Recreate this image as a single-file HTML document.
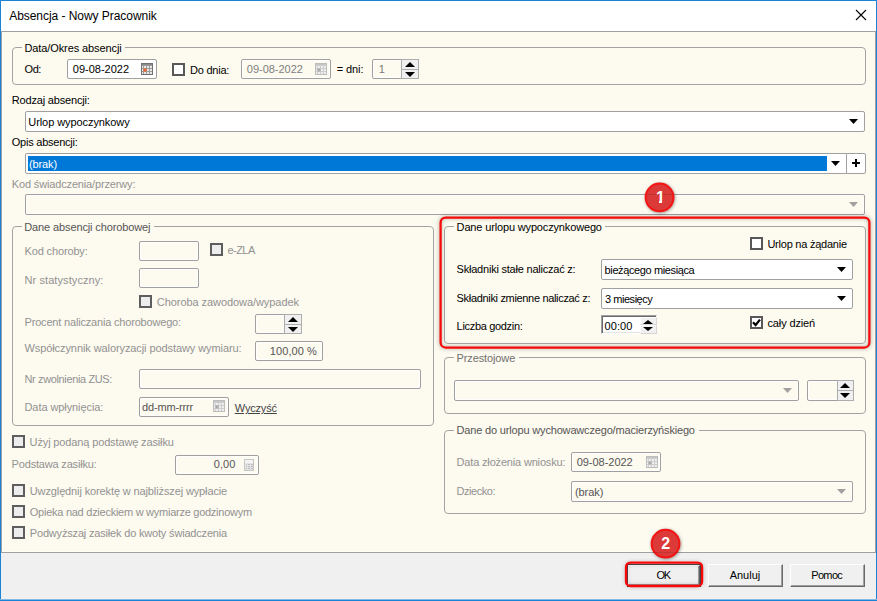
<!DOCTYPE html>
<html lang="pl"><head><meta charset="utf-8"><title>Absencja - Nowy Pracownik</title>
<style>
html,body{margin:0;padding:0;}
body{width:877px;height:601px;overflow:hidden;background:#F0F0F0;font-family:"Liberation Sans",sans-serif;font-size:11px;}
#win{position:absolute;left:0;top:0;width:877px;height:601px;background:#F0F0F0;overflow:hidden;}
.abs,.t,.gb,.in,.cb,.btn,.sp{position:absolute;box-sizing:border-box;}
.t{white-space:pre;line-height:14px;height:14px;}
.gb{border:1px solid #A3A3A3;border-radius:4px;}
.gt{position:absolute;background:#FDFAEF;height:3px;top:-2px;}
.in{border:1px solid #A0A0A0;border-radius:2px;background:#fff;}
.in.d{background:#FDFAEF;box-shadow:inset 0 0 0 1px #fff;}
.cb{width:13px;height:13px;border:2px solid #585858;background:#fff;}
.cb.d{background:#EDEDED;border-color:#5E5E5E;}
.btn{background:#F0F0F0;border-top:1px solid #fff;border-left:1px solid #fff;border-right:1px solid #696969;border-bottom:1px solid #696969;box-shadow:inset -1px -1px 0 #A0A0A0;}
.sb{position:absolute;box-sizing:border-box;background:#F0F0F0;border:1px solid #ADADAD;}
</style></head>
<body><div id="win">
<div class="abs" style="left:0;top:0;width:877px;height:601px;background:#1883D7"></div>
<div class="abs" style="left:1px;top:1px;width:875px;height:599px;background:#F0F0F0"></div>
<div class="abs" style="left:1px;top:1px;width:875px;height:30px;background:#fff"></div>
<div class="abs" style="left:1px;top:31px;width:875px;height:522px;background:#FDFAEF;border:1px solid #A0A0A0;box-shadow:inset 1px -1px 0 #FFFEF7;box-sizing:border-box"></div>
<div class="abs" style="left:0;top:599px;width:877px;height:1px;background:#84B9E3"></div>
<svg class="abs" style="left:855px;top:9px" width="12" height="12" viewBox="0 0 12 12"><path d="M1 1 L11 11 M11 1 L1 11" stroke="#000" stroke-width="1.1" fill="none"/></svg>
<div class="gb" style="left:12px;top:47px;width:854px;height:38px"><div class="gt" style="left:9px;width:103px"></div></div>
<div class="in " style="left:67px;top:59px;width:90px;height:20px"></div>
<svg class="abs" style="left:141px;top:63px" width="12" height="12" viewBox="0 0 12 12" shape-rendering="crispEdges"><rect x="0" y="0" width="12" height="12" fill="#707070"/><rect x="1" y="1" width="10" height="10" fill="#9C9C9C"/><rect x="1" y="1" width="10" height="1" fill="#8A8A8A"/><rect x="1" y="3" width="1" height="2" fill="#E8E8E8"/><rect x="3" y="3" width="2" height="2" fill="#E8E8E8"/><rect x="6" y="3" width="2" height="2" fill="#E8E8E8"/><rect x="9" y="3" width="2" height="2" fill="#E8E8E8"/><rect x="1" y="6" width="1" height="2" fill="#E8E8E8"/><rect x="3" y="6" width="2" height="2" fill="#E8E8E8"/><rect x="6" y="6" width="2" height="2" fill="#E8E8E8"/><rect x="9" y="6" width="2" height="2" fill="#E8E8E8"/><rect x="1" y="9" width="1" height="2" fill="#E8E8E8"/><rect x="3" y="9" width="2" height="2" fill="#E8E8E8"/><rect x="6" y="9" width="2" height="2" fill="#E8E8E8"/><rect x="9" y="9" width="2" height="2" fill="#E8E8E8"/><rect x="2.5" y="5.5" width="3" height="3" fill="#F0662C" shape-rendering="auto"/></svg>
<div class="cb " style="left:172px;top:63px"></div>
<div class="in d" style="left:241px;top:59px;width:90px;height:20px"></div>
<svg class="abs" style="left:315px;top:63px" width="12" height="12" viewBox="0 0 12 12" shape-rendering="crispEdges"><rect x="0" y="0" width="12" height="12" fill="#BDBDBD"/><rect x="1" y="1" width="10" height="10" fill="#CECECE"/><rect x="1" y="1" width="10" height="1" fill="#C6C6C6"/><rect x="1" y="3" width="1" height="2" fill="#EEEEEE"/><rect x="3" y="3" width="2" height="2" fill="#EEEEEE"/><rect x="6" y="3" width="2" height="2" fill="#EEEEEE"/><rect x="9" y="3" width="2" height="2" fill="#EEEEEE"/><rect x="1" y="6" width="1" height="2" fill="#EEEEEE"/><rect x="3" y="6" width="2" height="2" fill="#EEEEEE"/><rect x="6" y="6" width="2" height="2" fill="#EEEEEE"/><rect x="9" y="6" width="2" height="2" fill="#EEEEEE"/><rect x="1" y="9" width="1" height="2" fill="#EEEEEE"/><rect x="3" y="9" width="2" height="2" fill="#EEEEEE"/><rect x="6" y="9" width="2" height="2" fill="#EEEEEE"/><rect x="9" y="9" width="2" height="2" fill="#EEEEEE"/><rect x="2.5" y="5.5" width="3" height="3" fill="#ABABAB" shape-rendering="auto"/></svg>
<div class="in d" style="left:372px;top:59px;width:47px;height:20px"></div>
<div class="sb" style="left:401px;top:59px;width:18px;height:11px"></div>
<div class="sb" style="left:401px;top:69px;width:18px;height:10px"></div>
<svg class="abs" style="left:405px;top:62px" width="10" height="5"><polygon points="0,5 10,5 5.0,0" fill="#000"/></svg>
<svg class="abs" style="left:405px;top:72px" width="10" height="5"><polygon points="0,0 10,0 5.0,5" fill="#000"/></svg>
<div class="in " style="left:25px;top:111px;width:840px;height:21px"></div>
<svg class="abs" style="left:849px;top:119px" width="9" height="5"><polygon points="0,0 9,0 4.5,5" fill="#000"/></svg>
<div class="in" style="left:25px;top:153px;width:822px;height:21px;border-radius:2px 0 0 2px"></div>
<div class="abs" style="left:28px;top:156px;width:799px;height:15px;background:#0078D7"></div>
<svg class="abs" style="left:831px;top:161px" width="9" height="5"><polygon points="0,0 9,0 4.5,5" fill="#000"/></svg>
<div class="in" style="left:846px;top:153px;width:20px;height:21px;border-radius:0 2px 2px 0"></div>
<div class="abs" style="left:852px;top:162px;width:8px;height:2px;background:#000"></div><div class="abs" style="left:855px;top:159px;width:2px;height:8px;background:#000"></div>
<div class="in d" style="left:25px;top:194px;width:840px;height:21px"></div>
<svg class="abs" style="left:849px;top:202px" width="9" height="5"><polygon points="0,0 9,0 4.5,5" fill="#A0A0A0"/></svg>
<div class="gb" style="left:12px;top:226px;width:422px;height:200px"><div class="gt" style="left:9px;width:132px"></div></div>
<div class="in d" style="left:139px;top:241px;width:60px;height:20px"></div>
<div class="cb d" style="left:210px;top:243px"></div>
<div class="in d" style="left:139px;top:268px;width:60px;height:20px"></div>
<div class="cb d" style="left:139px;top:295px"></div>
<div class="in d" style="left:255px;top:314px;width:47px;height:20px"></div>
<div class="sb" style="left:284px;top:314px;width:18px;height:11px"></div>
<div class="sb" style="left:284px;top:324px;width:18px;height:10px"></div>
<svg class="abs" style="left:288px;top:317px" width="10" height="5"><polygon points="0,5 10,5 5.0,0" fill="#000"/></svg>
<svg class="abs" style="left:288px;top:327px" width="10" height="5"><polygon points="0,0 10,0 5.0,5" fill="#000"/></svg>
<div class="in d" style="left:255px;top:341px;width:68px;height:20px"></div>
<div class="in d" style="left:139px;top:369px;width:282px;height:20px"></div>
<div class="in d" style="left:139px;top:397px;width:90px;height:20px"></div>
<svg class="abs" style="left:213px;top:400px" width="12" height="12" viewBox="0 0 12 12" shape-rendering="crispEdges"><rect x="0" y="0" width="12" height="12" fill="#BDBDBD"/><rect x="1" y="1" width="10" height="10" fill="#CECECE"/><rect x="1" y="1" width="10" height="1" fill="#C6C6C6"/><rect x="1" y="3" width="1" height="2" fill="#EEEEEE"/><rect x="3" y="3" width="2" height="2" fill="#EEEEEE"/><rect x="6" y="3" width="2" height="2" fill="#EEEEEE"/><rect x="9" y="3" width="2" height="2" fill="#EEEEEE"/><rect x="1" y="6" width="1" height="2" fill="#EEEEEE"/><rect x="3" y="6" width="2" height="2" fill="#EEEEEE"/><rect x="6" y="6" width="2" height="2" fill="#EEEEEE"/><rect x="9" y="6" width="2" height="2" fill="#EEEEEE"/><rect x="1" y="9" width="1" height="2" fill="#EEEEEE"/><rect x="3" y="9" width="2" height="2" fill="#EEEEEE"/><rect x="6" y="9" width="2" height="2" fill="#EEEEEE"/><rect x="9" y="9" width="2" height="2" fill="#EEEEEE"/><rect x="2.5" y="5.5" width="3" height="3" fill="#ABABAB" shape-rendering="auto"/></svg>
<div class="cb d" style="left:12px;top:435px"></div>
<div class="in d" style="left:175px;top:455px;width:84px;height:20px"></div>
<svg class="abs" style="left:244px;top:459px" width="10" height="12" viewBox="0 0 10 12" shape-rendering="crispEdges"><rect width="10" height="12" fill="#C6C6C6"/><rect x="1" y="1" width="8" height="10" fill="#E4E4E4"/><rect x="1" y="1" width="8" height="3" fill="#F4F4F4"/><g fill="#BCBCBC"><rect x="2" y="5" width="1" height="1"/><rect x="4" y="5" width="2" height="1"/><rect x="7" y="5" width="2" height="1"/><rect x="2" y="7" width="1" height="1"/><rect x="4" y="7" width="2" height="1"/><rect x="7" y="7" width="2" height="1"/><rect x="2" y="9" width="1" height="1"/><rect x="4" y="9" width="2" height="1"/><rect x="7" y="9" width="2" height="1"/></g></svg>
<div class="cb d" style="left:12px;top:484px"></div>
<div class="cb d" style="left:12px;top:505px"></div>
<div class="cb d" style="left:12px;top:526px"></div>
<div class="abs" style="left:440px;top:217px;width:430px;height:131px;border-radius:5px;box-shadow:inset 0 0 5px 1px rgba(0,0,0,0.36), 0 0 4px 1px rgba(0,0,0,0.25)"></div>
<div class="gb" style="left:444px;top:226px;width:422px;height:118px"><div class="gt" style="left:9px;width:151px"></div></div>
<div class="cb " style="left:750px;top:237px"></div>
<div class="in " style="left:601px;top:259px;width:252px;height:21px"></div>
<svg class="abs" style="left:837px;top:267px" width="9" height="5"><polygon points="0,0 9,0 4.5,5" fill="#000"/></svg>
<div class="in " style="left:601px;top:288px;width:252px;height:21px"></div>
<svg class="abs" style="left:837px;top:296px" width="9" height="5"><polygon points="0,0 9,0 4.5,5" fill="#000"/></svg>
<div class="abs" style="left:601px;top:315px;width:56px;height:19px;background:#fff;box-sizing:border-box;border-top:1px solid #A0A0A0;border-left:1px solid #A0A0A0;border-right:1px solid #fff;border-bottom:1px solid #fff;box-shadow:inset 1px 1px 0 #696969, inset -1px -1px 0 #E3E3E3"></div>
<div class="abs" style="left:640px;top:317px;width:17px;height:8px;background:#F0F0F0;border:1px solid;border-color:#FBFBFB #D6D6D6 #D6D6D6 #FBFBFB;box-sizing:border-box"></div>
<div class="abs" style="left:640px;top:325px;width:17px;height:9px;background:#F0F0F0;border:1px solid;border-color:#FBFBFB #D6D6D6 #D6D6D6 #FBFBFB;box-sizing:border-box"></div>
<svg class="abs" style="left:643px;top:320px" width="10" height="4"><polygon points="0,4 10,4 5.0,0" fill="#000"/></svg>
<svg class="abs" style="left:643px;top:327px" width="10" height="4"><polygon points="0,0 10,0 5.0,4" fill="#000"/></svg>
<div class="cb " style="left:750px;top:316px"></div>
<svg class="abs" style="left:750px;top:316px" width="13" height="13" viewBox="0 0 13 13"><path d="M3 6.2 L5.6 9 L10 3.6" stroke="#000" stroke-width="2.2" fill="none"/></svg>
<div class="gb" style="left:444px;top:357px;width:422px;height:57px"><div class="gt" style="left:9px;width:65px"></div></div>
<div class="in d" style="left:454px;top:380px;width:345px;height:21px"></div>
<svg class="abs" style="left:783px;top:388px" width="9" height="5"><polygon points="0,0 9,0 4.5,5" fill="#A0A0A0"/></svg>
<div class="in d" style="left:807px;top:380px;width:47px;height:21px"></div>
<div class="sb" style="left:837px;top:380px;width:17px;height:11px"></div>
<div class="sb" style="left:837px;top:390px;width:17px;height:11px"></div>
<svg class="abs" style="left:840px;top:383px" width="10" height="5"><polygon points="0,5 10,5 5.0,0" fill="#000"/></svg>
<svg class="abs" style="left:840px;top:393px" width="10" height="5"><polygon points="0,0 10,0 5.0,5" fill="#000"/></svg>
<div class="gb" style="left:444px;top:430px;width:422px;height:84px"><div class="gt" style="left:9px;width:245px"></div></div>
<div class="in d" style="left:571px;top:452px;width:90px;height:20px"></div>
<svg class="abs" style="left:646px;top:456px" width="12" height="12" viewBox="0 0 12 12" shape-rendering="crispEdges"><rect x="0" y="0" width="12" height="12" fill="#BDBDBD"/><rect x="1" y="1" width="10" height="10" fill="#CECECE"/><rect x="1" y="1" width="10" height="1" fill="#C6C6C6"/><rect x="1" y="3" width="1" height="2" fill="#EEEEEE"/><rect x="3" y="3" width="2" height="2" fill="#EEEEEE"/><rect x="6" y="3" width="2" height="2" fill="#EEEEEE"/><rect x="9" y="3" width="2" height="2" fill="#EEEEEE"/><rect x="1" y="6" width="1" height="2" fill="#EEEEEE"/><rect x="3" y="6" width="2" height="2" fill="#EEEEEE"/><rect x="6" y="6" width="2" height="2" fill="#EEEEEE"/><rect x="9" y="6" width="2" height="2" fill="#EEEEEE"/><rect x="1" y="9" width="1" height="2" fill="#EEEEEE"/><rect x="3" y="9" width="2" height="2" fill="#EEEEEE"/><rect x="6" y="9" width="2" height="2" fill="#EEEEEE"/><rect x="9" y="9" width="2" height="2" fill="#EEEEEE"/><rect x="2.5" y="5.5" width="3" height="3" fill="#ABABAB" shape-rendering="auto"/></svg>
<div class="in d" style="left:571px;top:481px;width:282px;height:21px"></div>
<svg class="abs" style="left:837px;top:489px" width="9" height="5"><polygon points="0,0 9,0 4.5,5" fill="#A0A0A0"/></svg>
<div class="abs" style="left:627px;top:564px;width:74px;height:23px;background:#4A4A4A"></div>
<div class="btn" style="left:628px;top:565px;width:72px;height:21px"></div>
<div class="btn" style="left:708px;top:564px;width:75px;height:23px"></div>
<div class="btn" style="left:790px;top:564px;width:75px;height:23px"></div>
<span class="t" style="left:9.2px;top:9px;color:#000;font-size:12px;letter-spacing:-0.047px;">Absencja - Nowy Pracownik</span>
<span class="t" style="left:24.4px;top:41px;color:#000;font-size:11px;letter-spacing:-0.097px;">Data/Okres absencji</span>
<span class="t" style="left:24.6px;top:62px;color:#000;font-size:11px;letter-spacing:-0.467px;">Od:</span>
<span class="t" style="left:72.8px;top:62px;color:#000;font-size:11px;letter-spacing:0.002px;">09-08-2022</span>
<span class="t" style="left:190.0px;top:63px;color:#000;font-size:11px;letter-spacing:-0.226px;">Do dnia:</span>
<span class="t" style="left:246.8px;top:62px;color:#808080;font-size:11px;letter-spacing:-0.020px;">09-08-2022</span>
<span class="t" style="left:336.7px;top:62px;color:#000;font-size:11px;letter-spacing:-0.084px;">= dni:</span>
<span class="t" style="left:378.7px;top:62px;color:#7A7A7A;font-size:11px;letter-spacing:0.000px;">1</span>
<span class="t" style="left:11.8px;top:93px;color:#000;font-size:11px;letter-spacing:-0.181px;">Rodzaj absencji:</span>
<span class="t" style="left:28.3px;top:115px;color:#000;font-size:11px;letter-spacing:-0.077px;">Urlop wypoczynkowy</span>
<span class="t" style="left:11.8px;top:135px;color:#000;font-size:11px;letter-spacing:-0.238px;">Opis absencji:</span>
<span class="t" style="left:28.9px;top:157px;color:#fff;font-size:11px;letter-spacing:-0.087px;">(brak)</span>
<span class="t" style="left:11.8px;top:177px;color:#929292;font-size:11px;letter-spacing:-0.151px;">Kod świadczenia/przerwy:</span>
<span class="t" style="left:24.3px;top:220px;color:#555;font-size:11px;letter-spacing:-0.123px;">Dane absencji chorobowej</span>
<span class="t" style="left:24.5px;top:244px;color:#929292;font-size:11px;letter-spacing:-0.139px;">Kod choroby:</span>
<span class="t" style="left:227.4px;top:243px;color:#929292;font-size:11px;letter-spacing:-0.517px;">e-ZLA</span>
<span class="t" style="left:24.5px;top:273px;color:#929292;font-size:11px;letter-spacing:0.085px;">Nr statystyczny:</span>
<span class="t" style="left:156.8px;top:295px;color:#929292;font-size:11px;letter-spacing:-0.065px;">Choroba zawodowa/wypadek</span>
<span class="t" style="left:24.5px;top:315px;color:#929292;font-size:11px;letter-spacing:-0.182px;">Procent naliczania chorobowego:</span>
<span class="t" style="left:24.5px;top:341px;color:#929292;font-size:11px;letter-spacing:-0.088px;">Współczynnik waloryzacji podstawy wymiaru:</span>
<span class="t" style="left:269.8px;top:344px;color:#555;font-size:11px;letter-spacing:0.088px;">100,00 %</span>
<span class="t" style="left:24.5px;top:372px;color:#929292;font-size:11px;letter-spacing:-0.367px;">Nr zwolnienia ZUS:</span>
<span class="t" style="left:24.5px;top:400px;color:#929292;font-size:11px;letter-spacing:-0.080px;">Data wpłynięcia:</span>
<span class="t" style="left:142.0px;top:400px;color:#555;font-size:11px;letter-spacing:-0.150px;">dd-mm-rrrr</span>
<span class="t" style="left:234.8px;top:401px;color:#444;font-size:11px;letter-spacing:-0.183px;text-decoration:underline;">Wyczyść</span>
<span class="t" style="left:29.6px;top:435px;color:#929292;font-size:11px;letter-spacing:-0.136px;">Użyj podaną podstawę zasiłku</span>
<span class="t" style="left:11.6px;top:457px;color:#929292;font-size:11px;letter-spacing:-0.178px;">Podstawa zasiłku:</span>
<span class="t" style="left:213.8px;top:457px;color:#555;font-size:11px;letter-spacing:0.059px;">0,00</span>
<span class="t" style="left:29.8px;top:484px;color:#929292;font-size:11px;letter-spacing:-0.124px;">Uwzględnij korektę w najbliższej wypłacie</span>
<span class="t" style="left:29.8px;top:505px;color:#929292;font-size:11px;letter-spacing:-0.259px;">Opieka nad dzieckiem w wymiarze godzinowym</span>
<span class="t" style="left:29.8px;top:526px;color:#929292;font-size:11px;letter-spacing:-0.179px;">Podwyższaj zasiłek do kwoty świadczenia</span>
<span class="t" style="left:456.6px;top:220px;color:#000;font-size:11px;letter-spacing:-0.152px;">Dane urlopu wypoczynkowego</span>
<span class="t" style="left:767.4px;top:237px;color:#000;font-size:11px;letter-spacing:-0.231px;">Urlop na żądanie</span>
<span class="t" style="left:456.6px;top:262px;color:#000;font-size:11px;letter-spacing:-0.217px;">Składniki stałe naliczać z:</span>
<span class="t" style="left:604.6px;top:263px;color:#000;font-size:11px;letter-spacing:-0.384px;">bieżącego miesiąca</span>
<span class="t" style="left:456.6px;top:291px;color:#000;font-size:11px;letter-spacing:-0.328px;">Składniki zmienne naliczać z:</span>
<span class="t" style="left:605.1px;top:292px;color:#000;font-size:11px;letter-spacing:-0.474px;">3 miesięcy</span>
<span class="t" style="left:456.6px;top:319px;color:#000;font-size:11px;letter-spacing:-0.318px;">Liczba godzin:</span>
<span class="t" style="left:604.6px;top:319px;color:#000;font-size:11px;letter-spacing:0.067px;">00:00</span>
<span class="t" style="left:767.5px;top:316px;color:#000;font-size:11px;letter-spacing:-0.136px;">cały dzień</span>
<span class="t" style="left:456.6px;top:351px;color:#707070;font-size:11px;letter-spacing:-0.122px;">Przestojowe</span>
<span class="t" style="left:456.6px;top:423px;color:#555;font-size:11px;letter-spacing:-0.172px;">Dane do urlopu wychowawczego/macierzyńskiego</span>
<span class="t" style="left:456.6px;top:455px;color:#929292;font-size:11px;letter-spacing:-0.172px;">Data złożenia wniosku:</span>
<span class="t" style="left:576.7px;top:455px;color:#555;font-size:11px;letter-spacing:-0.031px;">09-08-2022</span>
<span class="t" style="left:456.6px;top:484px;color:#929292;font-size:11px;letter-spacing:-0.470px;">Dziecko:</span>
<span class="t" style="left:575.0px;top:485px;color:#555;font-size:11px;letter-spacing:-0.087px;">(brak)</span>
<span class="t" style="left:656.4px;top:568px;color:#000;font-size:11px;letter-spacing:-1.306px;">OK</span>
<span class="t" style="left:729.7px;top:568px;color:#000;font-size:11px;letter-spacing:-0.016px;">Anuluj</span>
<span class="t" style="left:811.2px;top:568px;color:#000;font-size:11px;letter-spacing:-0.638px;">Pomoc</span>
<div class="abs" style="left:626px;top:563px;width:76px;height:23px;border-radius:4px;box-shadow:inset 0 0 4px 1px rgba(0,0,0,0.28), 0 0 4px 1px rgba(0,0,0,0.22)"></div><svg class="abs" style="left:0;top:0" width="877" height="601" viewBox="0 0 877 601"><rect x="440.6" y="217.5" width="428.8" height="130" rx="5" ry="5" fill="none" stroke="#FA0A0A" stroke-width="2.25"/><rect x="626" y="562.6" width="76.1" height="23.4" rx="4.5" ry="4.5" fill="none" stroke="#FA0A0A" stroke-width="2.3"/><circle cx="660.2" cy="198.25" r="15.2" fill="#000" opacity="0.33" style="filter:blur(1.6px)"/><circle cx="659.6" cy="197.45" r="13.9" fill="#DB3A39" stroke="#F51414" stroke-width="2"/><line x1="647.2" y1="194.5" x2="672" y2="194.5" stroke="#000" stroke-opacity="0.13" stroke-width="1"/><text x="660.4" y="203" font-family="Liberation Sans, sans-serif" font-size="16" font-weight="bold" fill="#fff" text-anchor="middle">1</text><rect x="654" y="200.6" width="5" height="3.4" fill="#DB3A39"/><rect x="662.1" y="200.6" width="4" height="3.4" fill="#DB3A39"/><circle cx="666.15" cy="544.5" r="15.2" fill="#000" opacity="0.33" style="filter:blur(1.6px)"/><circle cx="665.55" cy="543.7" r="13.9" fill="#DB3A39" stroke="#F51414" stroke-width="2"/><line x1="653" y1="552.5" x2="678" y2="552.5" stroke="#000" stroke-opacity="0.10" stroke-width="1"/><text x="665.65" y="549" font-family="Liberation Sans, sans-serif" font-size="16" font-weight="bold" fill="#fff" text-anchor="middle">2</text></svg>
</div></body></html>
